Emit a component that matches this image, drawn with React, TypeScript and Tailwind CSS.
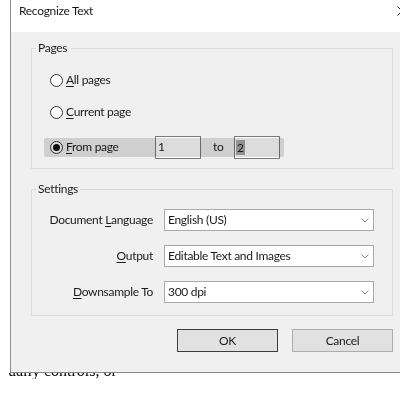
import React from 'react';

const Radio = ({ checked }: { checked?: boolean }) => (
  <span className="w-[13px] h-[13px] rounded-full border border-[#333] bg-white flex items-center justify-center shrink-0">
    {checked && <span className="w-[7px] h-[7px] rounded-full bg-[#111]" />}
  </span>
);

const Chevron = () => (
  <svg width="8" height="5" viewBox="0 0 8 5" className="shrink-0">
    <path d="M0.5 0.5 L4 4 L7.5 0.5" fill="none" stroke="#8a8a8a" strokeWidth="1" />
  </svg>
);

const Select = ({ value }: { value: string }) => (
  <div className="ml-[11px] w-[210px] h-[22px] bg-white border border-[#a9a9a9] flex items-center justify-between pl-[3px] pr-[4px]">
    <span>{value}</span>
    <Chevron />
  </div>
);

const settings = [
  { label: 'Document ', key: 'L', rest: 'anguage', value: 'English (US)' },
  { label: '', key: 'O', rest: 'utput', value: 'Editable Text and Images' },
  { label: '', key: 'D', rest: 'ownsample To', value: '300 dpi' },
];

const App = () => {
  return (
    <div
      className="w-[400px] h-[400px] bg-white overflow-hidden text-[12px] tracking-[-0.3px] text-[#1a1a1a]"
      style={{ fontFamily: 'Lato, "Noto Sans", sans-serif' }}
    >
      <div className="ml-[10px] w-[390px] border-l border-b border-[#8c8c8c]">
        {/* Title bar */}
        <div className="h-[32px] bg-white flex justify-between pl-[8px] pt-[3px] leading-[16px]">
          <span>Recognize Text</span>
          <svg width="10" height="10" viewBox="0 0 10 10" className="mt-[3px] -mr-[7px]">
            <path d="M0.5 0.5 L9.5 9.5 M9.5 0.5 L0.5 9.5" stroke="#222" strokeWidth="1" />
          </svg>
        </div>

        {/* Body */}
        <div className="h-[340px] bg-[#f0f0f0] pl-[20px] pt-[8px]">
          <fieldset className="w-[362px] border border-[#dcdcdc] pl-[18px] pb-[9px]">
            <legend className="ml-[-14px] px-[2px] leading-[16px]">Pages</legend>
            <div className="mt-[14px] h-[20px] flex items-center gap-[3px]">
              <Radio />
              <span>
                <span className="underline underline-offset-2">A</span>ll pages
              </span>
            </div>
            <div className="mt-[12px] h-[20px] flex items-center gap-[3px]">
              <Radio />
              <span>
                <span className="underline underline-offset-2">C</span>urrent page
              </span>
            </div>
            <div className="mt-[13px] h-[24px] flex items-center relative">
              <div className="w-[105px] flex items-center gap-[3px]">
                <Radio checked />
                <span>
                  <span className="underline underline-offset-2">F</span>rom page
                </span>
              </div>
              <div className="w-[46px] h-[23px] bg-white border border-[#7a7a7a] flex items-center pl-[2px]">1</div>
              <span className="w-[33px] pl-[12px]">to</span>
              <div className="w-[46px] h-[23px] bg-white border border-[#7a7a7a] flex items-center pl-[1px]">
                <span className="bg-[#a8a8a8] px-[1px] leading-[15px]">2</span>
              </div>
              {/* marker scribble over the row */}
              <div className="absolute left-[-6px] top-[3px] w-[240px] h-[19px] bg-[#dcdcdc] mix-blend-multiply rounded-[2px] pointer-events-none" />
            </div>
          </fieldset>

          <fieldset className="mt-[12px] w-[362px] border border-[#dcdcdc] pb-[12px]">
            <legend className="ml-[4px] px-[2px] leading-[16px]">Settings</legend>
            <div className="mt-[12px] flex flex-col gap-[14px]">
              {settings.map((s) => (
                <div key={s.rest} className="flex items-center h-[22px]">
                  <span className="w-[121px] text-right">
                    {s.label}
                    <span className="underline underline-offset-2">{s.key}</span>
                    {s.rest}
                  </span>
                  <Select value={s.value} />
                </div>
              ))}
            </div>
          </fieldset>

          <div className="mt-[13px] w-[362px] flex justify-end gap-[14px]">
            <button className="w-[101px] h-[23px] bg-[#e1e1e1] border border-[#3c3c3c]">OK</button>
            <button className="w-[101px] h-[23px] bg-[#e1e1e1] border border-[#adadad]">Cancel</button>
          </div>
        </div>
      </div>

      {/* page text peeking out under the dialog */}
      <div className="h-[6px] overflow-hidden pl-[8px]">
        <div
          className="-mt-[10px] text-[16px] leading-[16px] tracking-normal text-black"
          style={{ fontFamily: '"Liberation Serif", serif' }}
        >
          ually controls, or
        </div>
      </div>
    </div>
  );
};

export default App;
